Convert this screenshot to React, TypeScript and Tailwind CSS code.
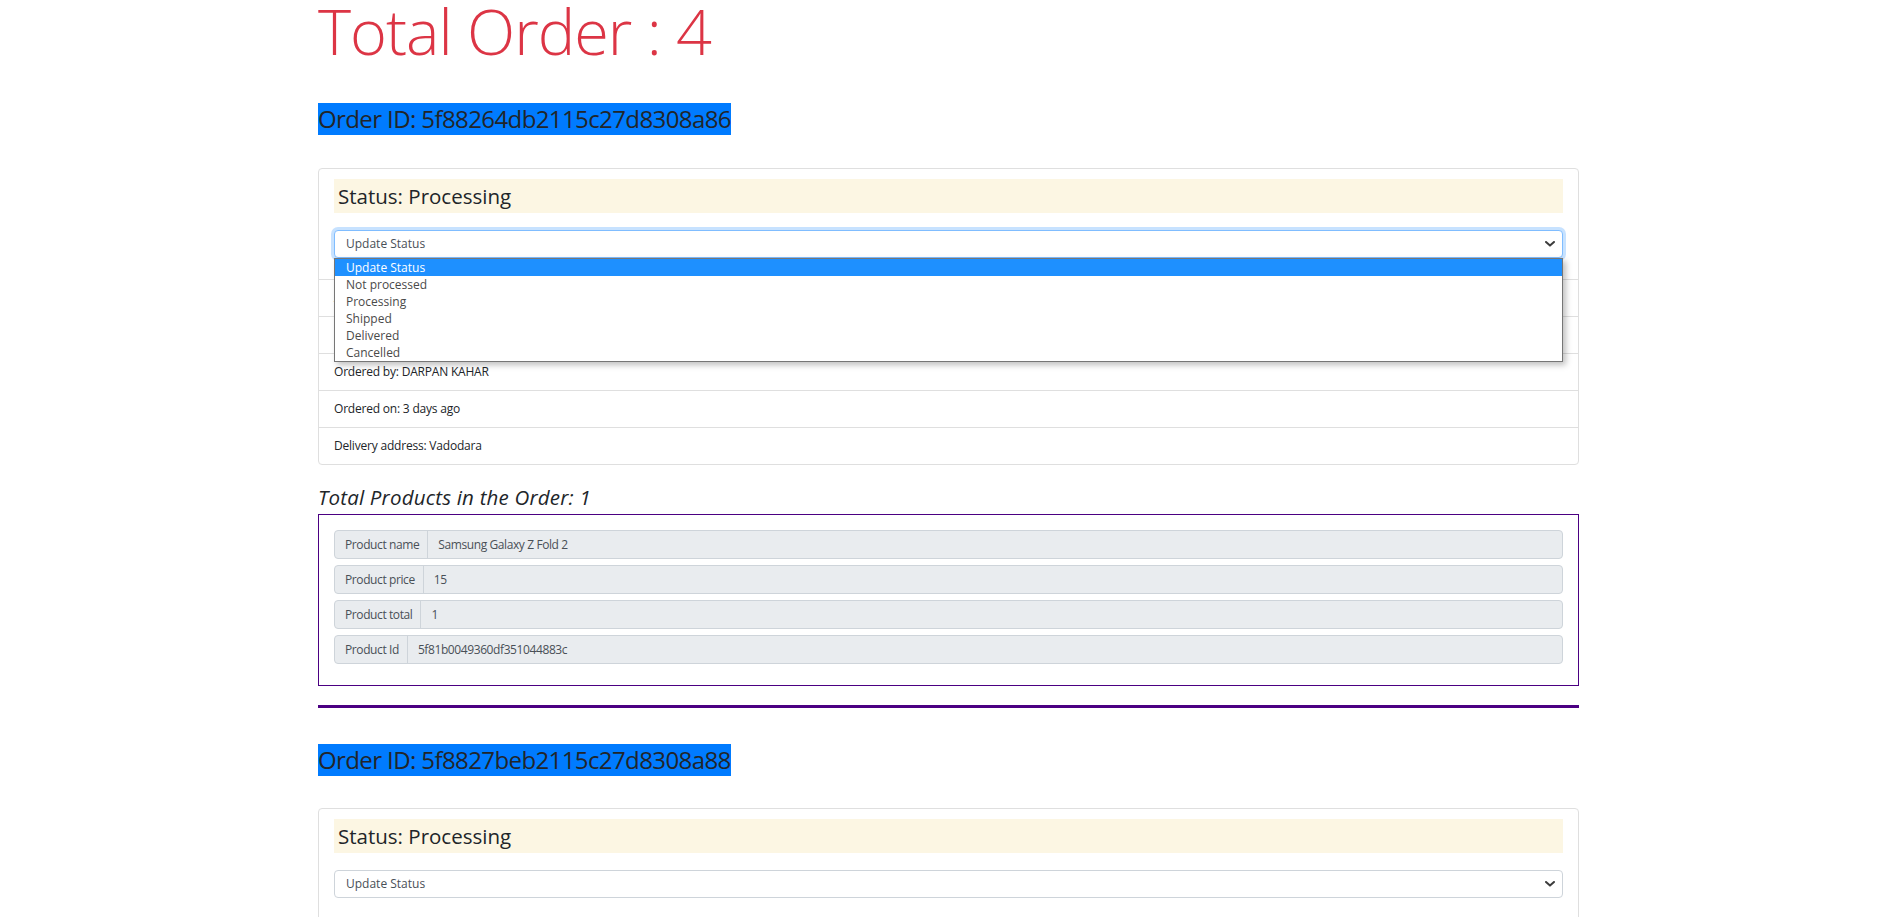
import React from "react";

const FONT = "font-['Segoe_UI','Open_Sans',sans-serif]";

function Chevron() {
  return (
    <svg width="10" height="6" viewBox="0 0 10 6" className="absolute right-[7px] top-1/2 -translate-y-1/2">
      <path d="M1 1l4 3.6L9 1" fill="none" stroke="#3c3c3c" strokeWidth="2" strokeLinecap="round" strokeLinejoin="round" />
    </svg>
  );
}

const OPTIONS = ["Update Status", "Not processed", "Processing", "Shipped", "Delivered", "Cancelled"];

function StatusSelect({ open }: { open?: boolean }) {
  return (
    <div className="relative mt-[17px]">
      <div
        className={
          open
            ? "relative h-[28px] rounded-[4px] border border-[#80bdff] bg-white pl-[11px] text-[12px] leading-[26px] text-[#495057] shadow-[0_0_0_3px_rgba(0,123,255,0.22)]"
            : "relative h-[28px] rounded-[4px] border border-[#ced4da] bg-white pl-[11px] text-[12px] leading-[26px] text-[#495057]"
        }
      >
        Update Status
        <Chevron />
      </div>
      {open && (
        <div className="absolute left-0 right-0 top-full z-10 border border-[#767676] bg-white shadow-[3px_3px_6px_rgba(0,0,0,0.25)]">
          {OPTIONS.map((o, i) => (
            <div
              key={o}
              className={
                i === 0
                  ? "h-[17px] bg-[#1e90ff] pl-[11px] text-[12px] leading-[17px] text-white"
                  : "h-[17px] pl-[11px] text-[12px] leading-[17px] text-[#4a4a4a]"
              }
            >
              {o}
            </div>
          ))}
        </div>
      )}
    </div>
  );
}

function OrderCard({ open, items }: { open?: boolean; items: string[] }) {
  return (
    <div className="rounded-[4px] border border-[#dfdfdf] bg-white">
      <div className="px-[15px] pt-[10px] pb-[21px]">
        <div className="h-[34px] bg-[#fcf6e3] pl-[4px] text-[20.5px] leading-[34px] text-[#212529]">
          Status: Processing
        </div>
        <StatusSelect open={open} />
      </div>
      {items.map((t) => (
        <div key={t} className="h-[37px] border-t border-[#dfdfdf] px-[15px] py-[9px] text-[12px] leading-[18px] tracking-[-0.2px] text-[#212529]">
          {t}
        </div>
      ))}
    </div>
  );
}

function Field({ label, value }: { label: string; value: string }) {
  return (
    <div className="mb-[6px] flex h-[29px] rounded-[4px] border border-[#ced4da] bg-[#e9ecef] text-[12px] leading-[27px] text-[#495057] tracking-[-0.4px]">
      <div className="border-r border-[#ced4da] pl-[10px] pr-[8px]">{label}</div>
      <div className="px-[10px]">{value}</div>
    </div>
  );
}

function OrderId({ id }: { id: string }) {
  return (
    <div>
      <span className="inline-block h-[32px] bg-[#007bff] text-[24px] leading-[32px] tracking-[-0.6px] text-[#212529]">
        Order ID: {id}
      </span>
    </div>
  );
}

export default function App() {
  const items = [
    "Amount: 15",
    "Payment: Cash on delivery",
    "Ordered by: DARPAN KAHAR",
    "Ordered on: 3 days ago",
    "Delivery address: Vadodara",
  ];
  return (
    <div className={`h-[917px] overflow-hidden bg-white ${FONT}`}>
      <div className="ml-[318px] w-[1261px]">
        <h1 className="mt-[-1px] h-[63px] text-[63px] font-light leading-[63px] tracking-[-1px] text-[#dc3545]">
          Total Order : 4
        </h1>
        <div className="mt-[41px]">
          <OrderId id="5f88264db2115c27d8308a86" />
        </div>
        <div className="mt-[33px]">
          <OrderCard open items={items} />
        </div>
        <div className="mt-[20px] h-[24px] text-[20.5px] font-medium italic leading-[24px] tracking-[0.2px] text-[#212529]">
          Total Products in the Order: 1
        </div>
        <div className="mt-[5px] border border-[#4b0082] px-[15px] pt-[15px] pb-[15px]">
          <Field label="Product name" value="Samsung Galaxy Z Fold 2" />
          <Field label="Product price" value="15" />
          <Field label="Product total" value="1" />
          <Field label="Product Id" value="5f81b0049360df351044883c" />
        </div>
        <div className="mt-[19px] h-[3px] bg-[#4b0082]" />
        <div className="mt-[36px]">
          <OrderId id="5f8827beb2115c27d8308a88" />
        </div>
        <div className="mt-[32px]">
          <OrderCard items={items} />
        </div>
      </div>
    </div>
  );
}
